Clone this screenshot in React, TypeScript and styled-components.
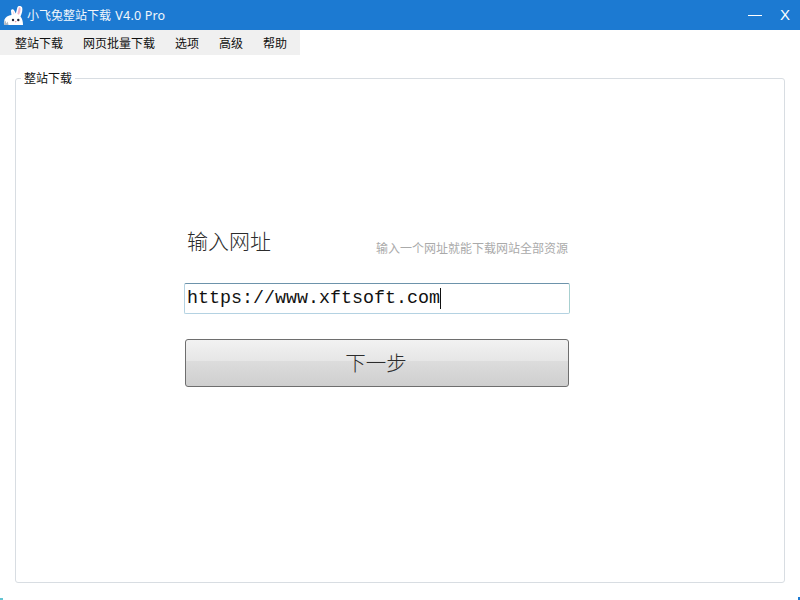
import React from "react";
import styled, { createGlobalStyle } from "styled-components";

const GlobalStyle = createGlobalStyle`
  html, body {
    margin: 0;
    padding: 0;
    background: #fff;
  }
  * {
    box-sizing: border-box;
  }
`;

const Window = styled.div`
  position: relative;
  width: 800px;
  height: 600px;
  overflow: hidden;
  display: flex;
  flex-direction: column;
  background: #fff;
  font-family: "Liberation Sans", "Noto Sans CJK SC", sans-serif;
  color: #111;
`;

const TitleBar = styled.div`
  height: 30px;
  flex: none;
  display: flex;
  align-items: center;
  padding: 0 8px 0 3px;
  background: #1c7ad2;
  color: #fff;
`;

const Title = styled.div`
  margin-left: 4px;
  font-size: 12px;
  color: #f2f7fc;
`;

const Version = styled.span`
  margin-left: 1px;
  font-family: "Noto Sans", sans-serif;
  font-size: 12.5px;
  letter-spacing: 0.2px;
`;

const MinButton = styled.div`
  width: 14px;
  height: 1px;
  margin-left: auto;
  margin-right: 16px;
  background: #fff;
`;

const CloseButton = styled.div`
  width: 14px;
  font-size: 15px;
  line-height: 30px;
  text-align: center;
`;

const MenuBar = styled.div`
  width: 300px;
  height: 25px;
  flex: none;
  display: flex;
  align-items: center;
  padding-left: 15px;
  gap: 20px;
  background: #f0f0f0;
`;

const MenuItem = styled.div`
  font-size: 12px;
  white-space: nowrap;
`;

const Group = styled.fieldset`
  flex: none;
  width: 770px;
  height: 513px;
  margin: 15px 0 0 15px;
  padding: 0;
  border: 1px solid #d8dde2;
  border-radius: 3px;
  display: flex;
  flex-direction: column;
`;

const GroupLabel = styled.legend`
  margin-left: 5px;
  padding: 2px 3px 0;
  font-size: 12px;
  line-height: 14px;
`;

const Form = styled.div`
  width: 386px;
  margin: 141px 0 0 168px;
  display: flex;
  flex-direction: column;
`;

const HeadingRow = styled.div`
  height: 41px;
  display: flex;
  align-items: flex-end;
  justify-content: space-between;
  padding: 0 2px 0 3px;
`;

const Heading = styled.div`
  font-size: 21px;
  font-weight: 300;
  line-height: 28px;
  margin-bottom: 12px;
  color: #2c2c2c;
`;

const Hint = styled.div`
  font-size: 12px;
  line-height: 16px;
  margin-bottom: 11px;
  color: #aaa;
`;

const UrlBox = styled.div`
  height: 31px;
  margin-top: 15px;
  padding-left: 2px;
  display: flex;
  align-items: center;
  border: 1px solid #b4d2e2;
  border-top-color: #6d93ab;
  border-right-color: #a8d0d0;
  border-radius: 2px;
  font-family: "Liberation Mono", monospace;
  font-size: 18.33px;
  color: #111;
`;

const Caret = styled.span`
  width: 1px;
  height: 21px;
  background: #111;
`;

const NextButton = styled.button`
  width: 384px;
  height: 48px;
  margin: 25px 0 0 1px;
  padding: 0 2px 3px 0;
  border: 1px solid #6e6e6e;
  border-radius: 3px;
  background: linear-gradient(#f2f2f2 0, #e6e6e6 45%, #dcdcdc 46%, #cfcfcf 100%);
  font-family: "Noto Sans CJK SC", sans-serif;
  font-size: 20.5px;
  font-weight: 300;
  color: #2c2c2c;
`;

const WindowCorner = styled.div<{ $side: "left" | "right" }>`
  position: absolute;
  bottom: 0;
  ${(props) => props.$side}: 0;
  width: ${(props) => (props.$side === "left" ? "3px" : "2px")};
  height: ${(props) => (props.$side === "left" ? "2px" : "3px")};
  background: ${(props) => (props.$side === "left" ? "#62c4d2" : "#1c7ad2")};
`;

const RabbitIcon = () => (
  <svg width="20" height="20" viewBox="0 0 20 20">
    <path d="M1 20c-.5-4 .5-7 3-8.500 1.500-1 3-1.500 4.500-1.500L8 6c0-2 2-2.500 3-1l1.800 3.500L14.500 2c.5-1.500 3.500-1.500 4.500 0 1 2.500 0 6.500-1.500 9.500 1.800 2 2.500 5 2.500 8.500z" fill="#fff" />
    <path d="M15.800 2.500c.5-.6 1.500-.4 1.700.5.300 2-.4 4.500-1.500 6.800l-1.600-.8z" fill="#f2b3c8" />
    <path d="M9.500 6c.4-.3.8 0 1 .5l1 2.500-1.200.5z" fill="#f7d5df" />
    <circle cx="10" cy="15" r="1.200" fill="#26263a" />
    <circle cx="15.300" cy="15" r="1.200" fill="#26263a" />
    <path d="M11.700 16.200h2l-1 1.300z" fill="#e2738c" />
    <path d="M1 20l.6-5 1.200 1.500.6 2 1.400-2 .7 3.500z" fill="#aeb8c4" />
  </svg>
);

export default function App() {
  return (
    <>
      <GlobalStyle />
      <Window>
        <TitleBar>
          <RabbitIcon />
          <Title>
            小飞兔整站下载 <Version>V4.0 Pro</Version>
          </Title>
          <MinButton />
          <CloseButton>X</CloseButton>
        </TitleBar>
        <MenuBar>
          <MenuItem>整站下载</MenuItem>
          <MenuItem>网页批量下载</MenuItem>
          <MenuItem>选项</MenuItem>
          <MenuItem>高级</MenuItem>
          <MenuItem>帮助</MenuItem>
        </MenuBar>
        <Group>
          <GroupLabel>整站下载</GroupLabel>
          <Form>
            <HeadingRow>
              <Heading>输入网址</Heading>
              <Hint>输入一个网址就能下载网站全部资源</Hint>
            </HeadingRow>
            <UrlBox>
              https://www.xftsoft.com
              <Caret />
            </UrlBox>
            <NextButton>下一步</NextButton>
          </Form>
        </Group>
        <WindowCorner $side="left" />
        <WindowCorner $side="right" />
      </Window>
    </>
  );
}
